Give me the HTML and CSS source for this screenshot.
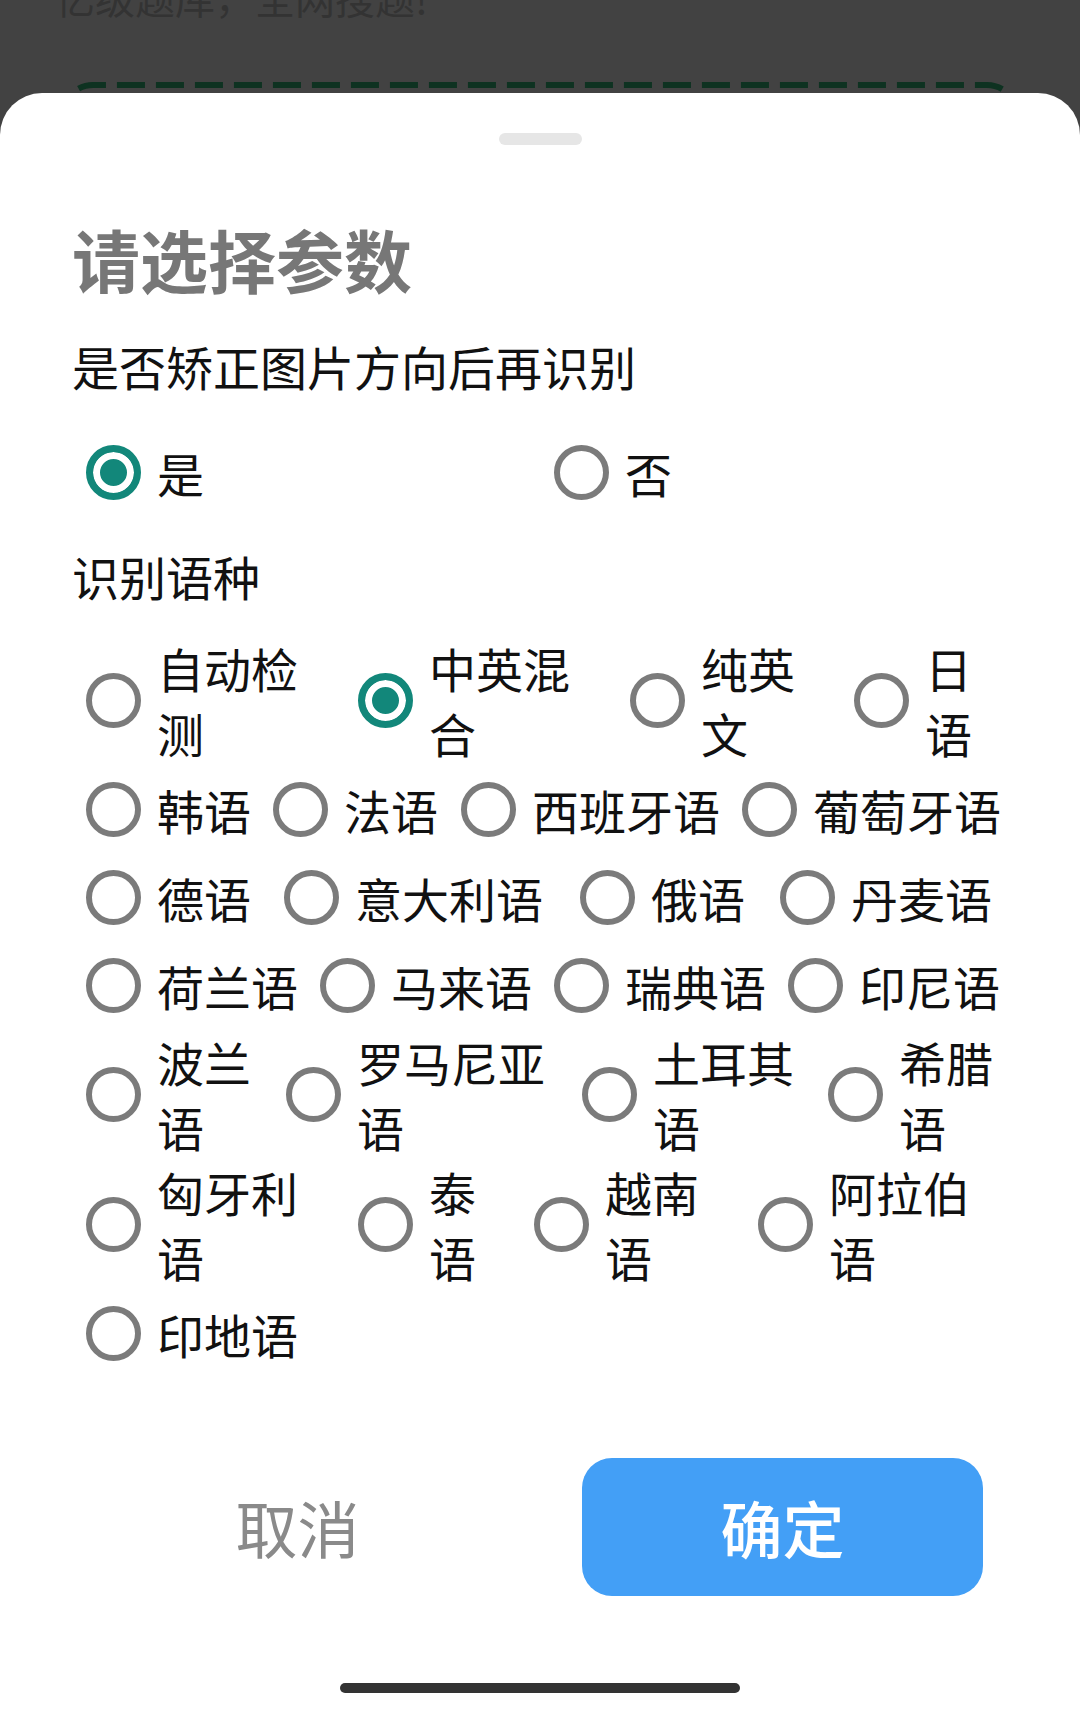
FILE: index.html
```html
<!DOCTYPE html>
<html lang="zh-CN">
<head>
    <meta charset="UTF-8">
    <meta name="viewport" content="width=device-width, initial-scale=1.0">
    <title>请选择参数</title>
    <link rel="stylesheet" href="styles.css">
</head>
<body>
    <!-- page behind the sheet, dimmed -->
    <div class="bg-page">
        <div class="bg-title">亿级题库，全网搜题!</div>
        <svg class="scan-frame" width="968" height="40" viewBox="0 0 968 40">
            <path d="M7 40 V33 A30 30 0 0 1 37 3 H931 A30 30 0 0 1 961 33 V40" fill="none" stroke="#0e3221" stroke-width="6" stroke-dasharray="28 11"/>
        </svg>
    </div>

    <div class="sheet">
        <div class="handle"></div>
        <h1 class="sheet-title">请选择参数</h1>

        <div class="section-label">是否矫正图片方向后再识别</div>
        <div class="option-row halves">
            <label class="option"><span class="radio checked"></span><span class="option-text">是</span></label>
            <label class="option"><span class="radio"></span><span class="option-text">否</span></label>
        </div>

        <div class="section-label lang-label">识别语种</div>
        <div class="lang-list">
            <div class="option-row row-1">
                <label class="option"><span class="radio"></span><span class="option-text">自动检测</span></label>
                <label class="option"><span class="radio checked"></span><span class="option-text">中英混合</span></label>
                <label class="option"><span class="radio"></span><span class="option-text">纯英文</span></label>
                <label class="option"><span class="radio"></span><span class="option-text">日语</span></label>
            </div>
            <div class="option-row row-2 single">
                <label class="option"><span class="radio"></span><span class="option-text">韩语</span></label>
                <label class="option"><span class="radio"></span><span class="option-text">法语</span></label>
                <label class="option"><span class="radio"></span><span class="option-text">西班牙语</span></label>
                <label class="option"><span class="radio"></span><span class="option-text">葡萄牙语</span></label>
            </div>
            <div class="option-row row-3 single">
                <label class="option"><span class="radio"></span><span class="option-text">德语</span></label>
                <label class="option"><span class="radio"></span><span class="option-text">意大利语</span></label>
                <label class="option"><span class="radio"></span><span class="option-text">俄语</span></label>
                <label class="option"><span class="radio"></span><span class="option-text">丹麦语</span></label>
            </div>
            <div class="option-row row-4 single">
                <label class="option"><span class="radio"></span><span class="option-text">荷兰语</span></label>
                <label class="option"><span class="radio"></span><span class="option-text">马来语</span></label>
                <label class="option"><span class="radio"></span><span class="option-text">瑞典语</span></label>
                <label class="option"><span class="radio"></span><span class="option-text">印尼语</span></label>
            </div>
            <div class="option-row row-5">
                <label class="option"><span class="radio"></span><span class="option-text">波兰语</span></label>
                <label class="option"><span class="radio"></span><span class="option-text">罗马尼亚语</span></label>
                <label class="option"><span class="radio"></span><span class="option-text">土耳其语</span></label>
                <label class="option"><span class="radio"></span><span class="option-text">希腊语</span></label>
            </div>
            <div class="option-row row-6">
                <label class="option"><span class="radio"></span><span class="option-text">匈牙利语</span></label>
                <label class="option"><span class="radio"></span><span class="option-text">泰语</span></label>
                <label class="option"><span class="radio"></span><span class="option-text">越南语</span></label>
                <label class="option"><span class="radio"></span><span class="option-text">阿拉伯语</span></label>
            </div>
            <div class="option-row row-7 single">
                <label class="option"><span class="radio"></span><span class="option-text">印地语</span></label>
            </div>
        </div>

        <div class="actions">
            <button class="btn btn-cancel">取消</button>
            <button class="btn btn-ok">确定</button>
        </div>

        <div class="home-bar"></div>
    </div>
</body>
</html>
```

FILE: styles.css
```css
* {
    margin: 0;
    padding: 0;
    box-sizing: border-box;
}

body {
    font-family: "Noto Sans CJK SC", "Noto Sans", sans-serif;
    background: #424242;
    color: #111;
    min-height: 100vh;
}

/* dimmed page behind the sheet */
.bg-page {
    height: 93px;
    overflow: hidden;
    padding-left: 55px;
}

.bg-title {
    margin-top: -27px;
    font-size: 40px;
    line-height: 48px;
    color: #333;
}

.scan-frame {
    display: block;
    margin-top: 61px;
    margin-left: 1px;
}

/* bottom sheet */
.sheet {
    background: #fff;
    border-radius: 42px 42px 0 0;
    min-height: calc(100vh - 93px);
    padding: 40px 72px 18px;
}

.handle {
    width: 83px;
    height: 12px;
    border-radius: 6px;
    background: #e6e6e6;
    margin: 0 auto;
}

.sheet-title {
    margin-top: 74px;
    font-size: 68px;
    line-height: 80px;
    font-weight: 700;
    color: #777;
}

.section-label {
    margin-top: 35px;
    font-size: 47px;
    line-height: 64px;
    color: #111;
}

.lang-label {
    margin-top: 28px;
}

.option-row {
    display: grid;
}

.halves {
    margin-top: 30px;
    grid-template-columns: 1fr 1fr;
}

.lang-list {
    margin-top: 27px;
}

.row-1 { grid-template-columns: 272px 272px 224px 1fr; }
.row-2 { grid-template-columns: 187px 188px 281px 1fr; }
.row-3 { grid-template-columns: 198px 296px 200px 1fr; }
.row-4 { grid-template-columns: repeat(4, 1fr); }
.row-5 { grid-template-columns: 200px 296px 246px 1fr; }
.row-6 { grid-template-columns: 272px 176px 224px 1fr; }
.row-7 { grid-template-columns: 1fr; }

.option {
    display: flex;
    align-items: center;
    min-height: 88px;
    padding: 0 6px 0 14px;
    cursor: pointer;
}

.radio {
    flex: none;
    width: 55px;
    height: 55px;
    margin-right: 16px;
    border: 6px solid #7b7b7b;
    border-radius: 50%;
}

.radio.checked {
    border: 7px solid #12877a;
    background: #12877a;
    box-shadow: inset 0 0 0 7px #fff;
}

.option-text {
    font-size: 47px;
    line-height: 65px;
    color: #111;
}

.single .option-text {
    white-space: nowrap;
}

/* buttons */
.actions {
    display: grid;
    grid-template-columns: 1fr 1fr;
    gap: 84px;
    margin-top: 81px;
    padding: 0 25px;
}

.btn {
    height: 138px;
    border: none;
    border-radius: 30px;
    font-family: inherit;
    font-size: 62px;
    cursor: pointer;
}

.btn-cancel {
    background: transparent;
    color: #8a8a8a;
}

.btn-ok {
    background: #439ff6;
    color: #fff;
    font-weight: 500;
}

.home-bar {
    width: 400px;
    height: 10px;
    border-radius: 5px;
    background: #333;
    margin: 87px auto 0;
}
```
